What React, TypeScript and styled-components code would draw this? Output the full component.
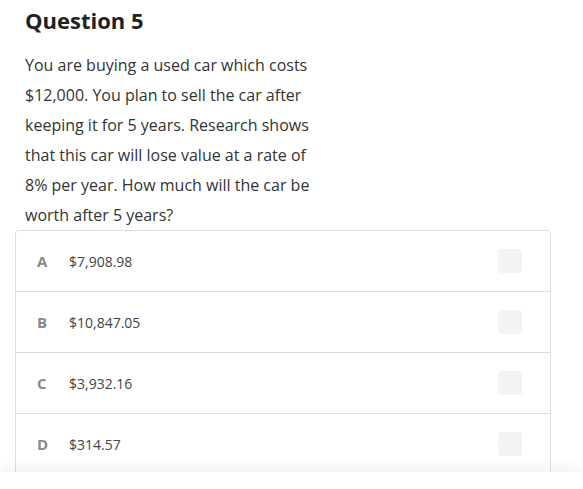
import styled, { createGlobalStyle } from "styled-components"

const Global = createGlobalStyle`
  body {
    margin: 0;
    background: #fff;
    font-family: "Open Sans", "Noto Sans", sans-serif;
  }
`

const options = [
  { key: "A", text: "$7,908.98" },
  { key: "B", text: "$10,847.05" },
  { key: "C", text: "$3,932.16" },
  { key: "D", text: "$314.57" },
]

const App = () => {
  return (
    <>
      <Global />
      <Page>
        <Title>Question 5</Title>
        <Prompt>
          You are buying a used car which costs $12,000. You plan to sell the car after keeping it for 5 years.
          Research shows that this car will lose value at a rate of 8% per year. How much will the car be worth
          after 5 years?
        </Prompt>
        <Card>
          {options.map((o) => (
            <Option key={o.key}>
              <Letter>{o.key}</Letter>
              <Answer>{o.text}</Answer>
              <Check />
            </Option>
          ))}
        </Card>
      </Page>
      <Footer />
    </>
  )
}

export default App

const Page = styled.div`
  padding: 6px 0 60px 15px;
`
const Title = styled.h2`
  margin: 0 0 16px 10px;
  font-size: 22px;
  line-height: 28px;
  font-weight: 700;
  color: #222;
`
const Prompt = styled.p`
  margin: 0 0 0 10px;
  width: 292px;
  font-size: 16px;
  line-height: 30px;
  color: #333;
`
const Card = styled.div`
  width: 534px;
  border: 1px solid #ddd;
  border-radius: 4px;
  background: #fff;
`
const Option = styled.div`
  height: 60px;
  display: flex;
  align-items: center;
  padding: 0 28px 0 21px;
  border-top: 1px solid #ddd;
  &:first-child {
    border-top: 0;
  }
`
const Letter = styled.span`
  width: 32px;
  font-size: 15px;
  font-weight: 700;
  color: #888;
`
const Answer = styled.span`
  flex: 1;
  font-size: 14px;
  color: #444;
`
const Check = styled.div`
  width: 24px;
  height: 24px;
  border-radius: 4px;
  background: #f3f3f3;
`
const Footer = styled.div`
  position: fixed;
  left: 0;
  right: 0;
  bottom: 0;
  height: 17px;
  background: #fff;
  box-shadow: 0 -4px 14px rgba(0, 0, 0, 0.06);
`
